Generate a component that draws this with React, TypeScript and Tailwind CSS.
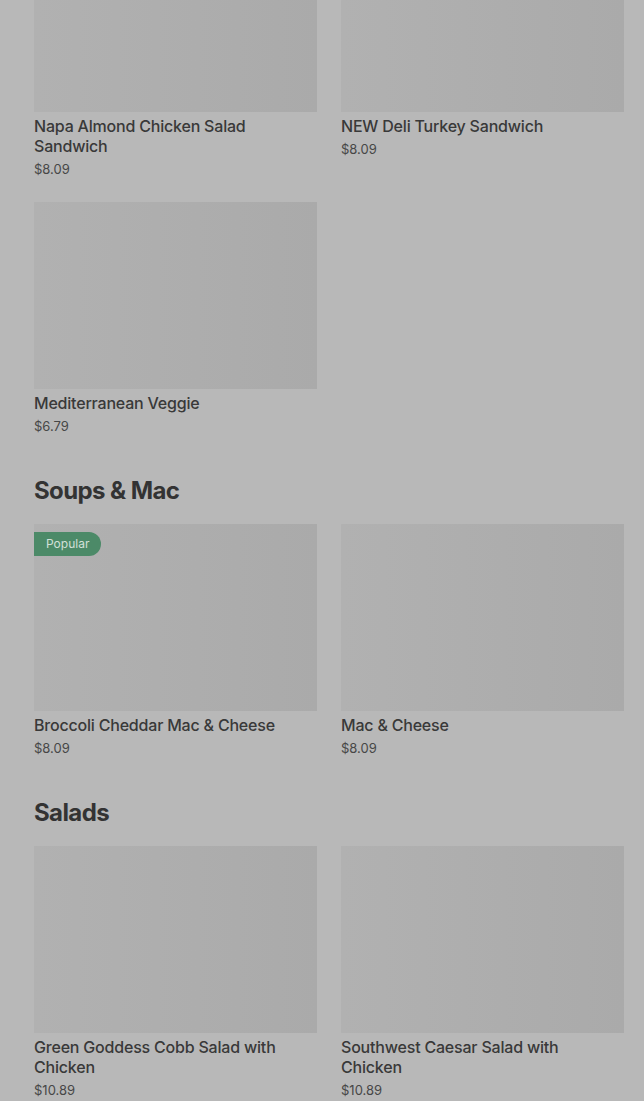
type Item = { name: string; price: string; popular?: boolean };

const SECTIONS: { title?: string; items: Item[] }[] = [
  {
    items: [
      { name: 'Napa Almond Chicken Salad Sandwich', price: '$8.09' },
      { name: 'NEW Deli Turkey Sandwich', price: '$8.09' },
      { name: 'Mediterranean Veggie', price: '$6.79' },
    ],
  },
  {
    title: 'Soups & Mac',
    items: [
      { name: 'Broccoli Cheddar Mac & Cheese', price: '$8.09', popular: true },
      { name: 'Mac & Cheese', price: '$8.09' },
    ],
  },
  {
    title: 'Salads',
    items: [
      { name: 'Green Goddess Cobb Salad with Chicken', price: '$10.89' },
      { name: 'Southwest Caesar Salad with Chicken', price: '$10.89' },
    ],
  },
];

function ItemCard({ item }: { item: Item }) {
  return (
    <div className="flex flex-col">
      <div className="relative h-[187px] bg-gradient-to-r from-[#b1b1b1] to-[#aaaaaa]">
        {item.popular && (
          <span className="absolute left-0 top-2 h-6 px-3 flex items-center rounded-r-full bg-[#4c8a68] text-[12px] text-[#d3e0d8]">
            Popular
          </span>
        )}
      </div>
      <p className="mt-1 pr-8 text-[16px] leading-5 font-medium tracking-[-0.2px] text-[#393939]">{item.name}</p>
      <p className="mt-1 text-[13px] leading-[18px] text-[#474747]">{item.price}</p>
    </div>
  );
}

export default function App() {
  return (
    <div className="min-h-screen overflow-hidden bg-[#b8b8b8] font-['Inter',sans-serif]">
      <div className="-mt-[75px] pl-[34px] pr-[20px] pb-10">
        {SECTIONS.map((s, i) => (
          <section key={i} className={i > 0 ? 'mt-10' : ''}>
            {s.title && (
              <h2 className="mb-[17px] text-[24px] leading-8 font-bold tracking-[-0.6px] text-[#333333]">{s.title}</h2>
            )}
            <div className="grid grid-cols-2 gap-x-6 gap-y-6">
              {s.items.map(item => (
                <ItemCard key={item.name} item={item} />
              ))}
            </div>
          </section>
        ))}
      </div>
    </div>
  );
}
